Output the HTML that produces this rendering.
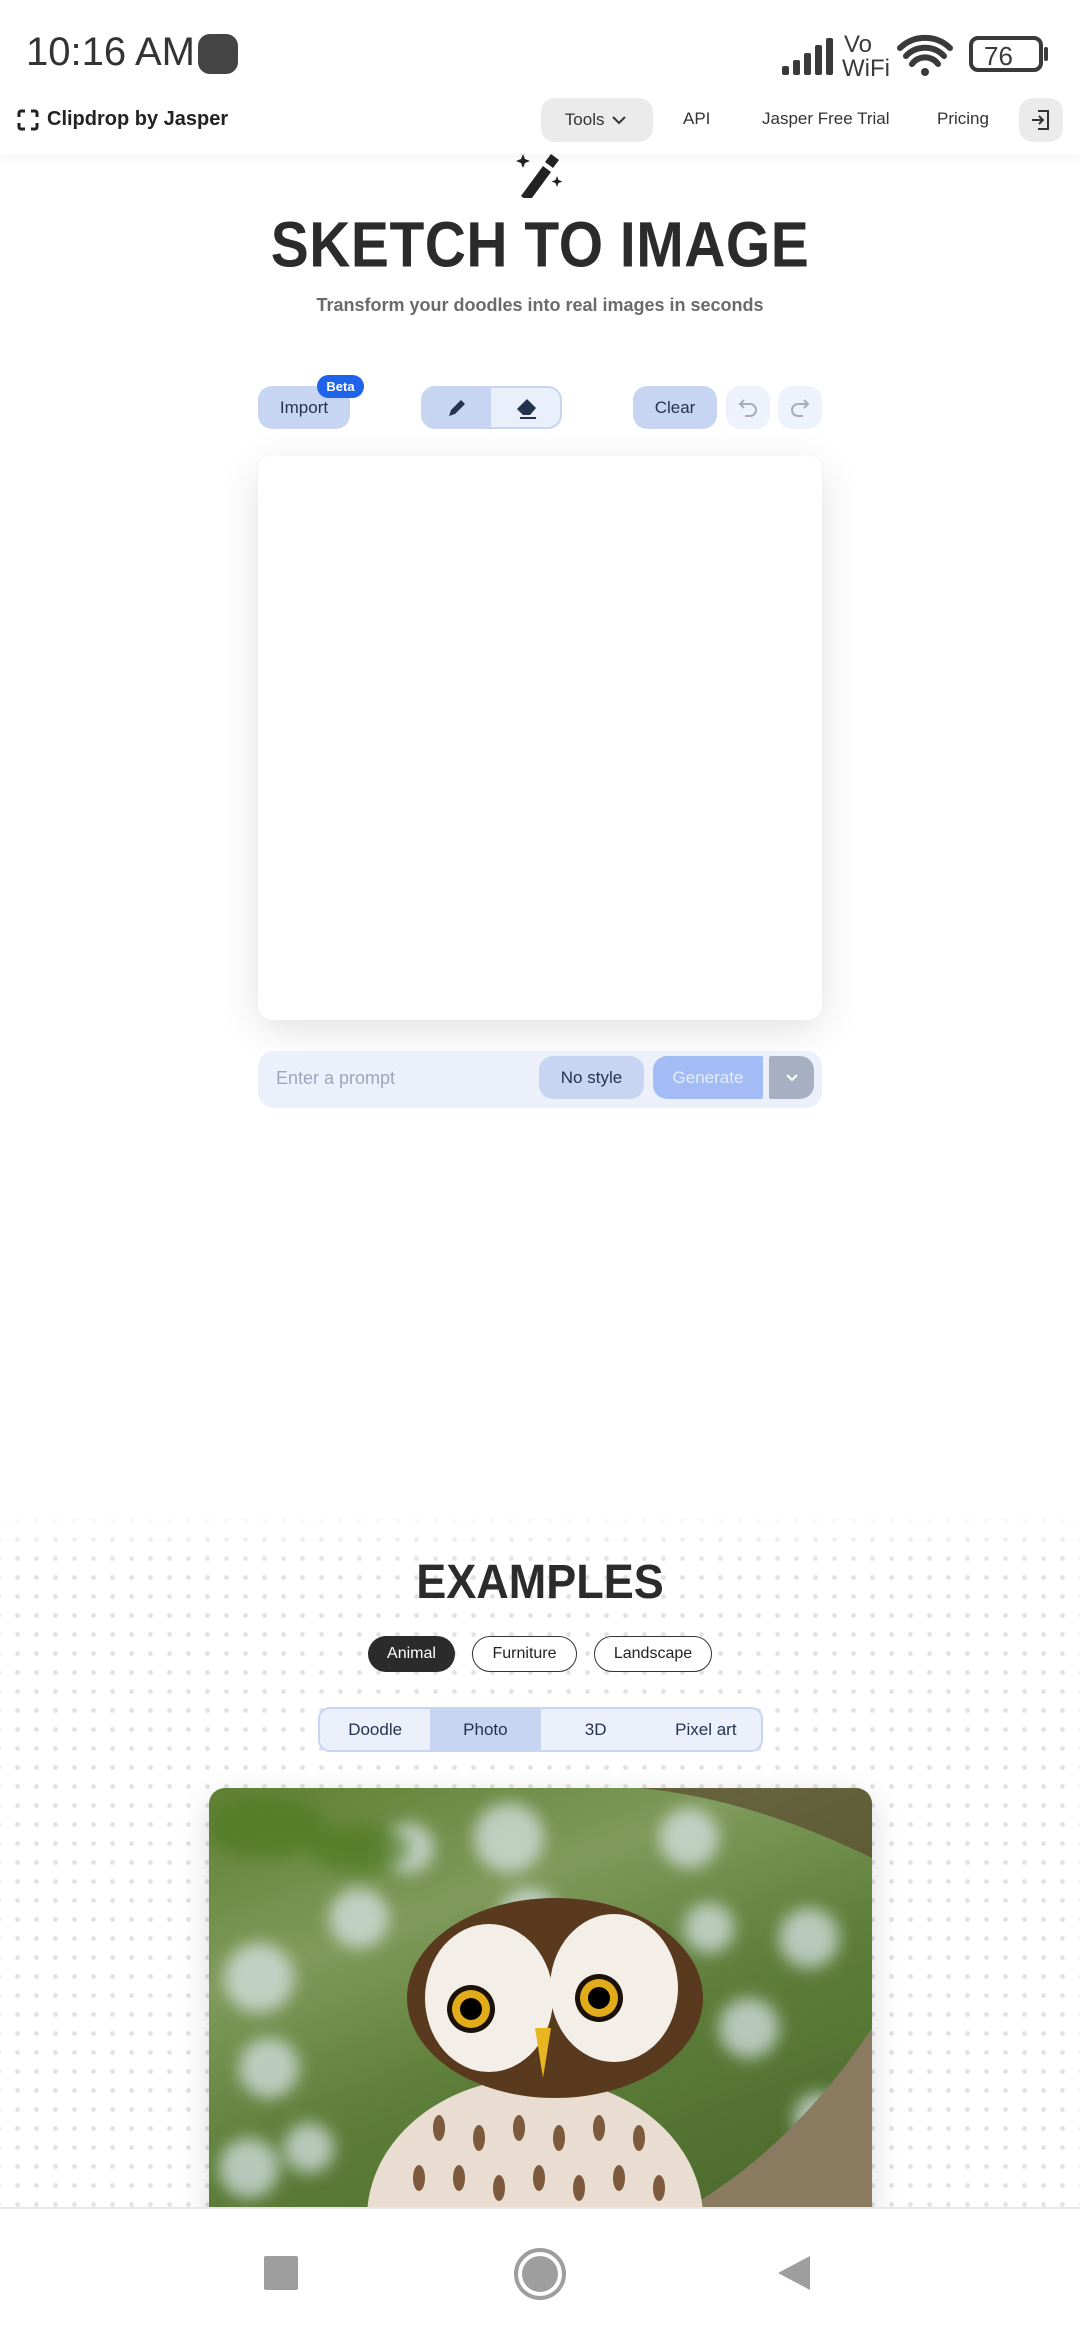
<!DOCTYPE html>
<html><head><meta charset="utf-8"><style>
*{box-sizing:border-box;margin:0;padding:0}
body{width:1080px;height:2340px;position:relative;overflow:hidden;background:#fff;font-family:"Liberation Sans",sans-serif;color:#222}
.a{position:absolute}
.btn{position:absolute;display:flex;align-items:center;justify-content:center;border-radius:14px}
.dots{position:absolute;left:0;top:1505px;width:1080px;height:720px;background-image:radial-gradient(circle,#e2e2e2 2.2px,transparent 2.6px);background-size:19px 19px;background-position:8px 6px}
.fade{position:absolute;left:0;top:1505px;width:1080px;height:60px;background:linear-gradient(#fff,rgba(255,255,255,0))}
</style></head><body>
<div class="a" style="left:26px;top:30px;font-size:40px;color:#333">10:16 AM</div>
<div class="a" style="left:198px;top:34px;width:40px;height:40px;background:#444;border-radius:12px"></div>
<svg class="a" style="left:778px;top:30px" width="280" height="50" viewBox="0 0 280 50">
<g fill="#3a3a3a"><rect x="4" y="36" width="7" height="9" rx="2"/><rect x="15" y="30" width="7" height="15" rx="2"/><rect x="26" y="23" width="7" height="22" rx="2"/><rect x="37" y="15" width="7" height="30" rx="2"/><rect x="48" y="8" width="7" height="37" rx="2"/></g>
<text x="66" y="22" font-size="24" fill="#3a3a3a" font-family="Liberation Sans">Vo</text>
<text x="64" y="46" font-size="24" fill="#3a3a3a" font-family="Liberation Sans">WiFi</text>
<path d="M122 18a36 36 0 0 1 50 0M128 26a26 26 0 0 1 38 0M134 34a16 16 0 0 1 26 0" stroke="#3a3a3a" stroke-width="6" fill="none" stroke-linecap="round"/>
<circle cx="147" cy="42" r="4" fill="#3a3a3a"/>
<rect x="193" y="8" width="70" height="32" rx="7" fill="none" stroke="#3a3a3a" stroke-width="4"/>
<rect x="266" y="17" width="4" height="14" rx="2" fill="#3a3a3a"/>
<text x="206" y="35" font-size="26" fill="#3a3a3a" font-family="Liberation Sans">76</text>
</svg>
<div class="a" style="left:0;top:92px;width:1080px;height:62px;background:#fff;box-shadow:0 6px 10px rgba(0,0,0,0.04)"></div>
<svg class="a" style="left:16px;top:108px" width="24" height="24" viewBox="0 0 24 24"><path d="M3 9V5a2 2 0 0 1 2-2h4M15 3h4a2 2 0 0 1 2 2v4M21 15v4a2 2 0 0 1-2 2h-4M9 21H5a2 2 0 0 1-2-2v-4" stroke="#222" stroke-width="3" fill="none"/></svg>
<div class="a" style="left:47px;top:108px;font-size:20px;font-weight:bold;color:#222">Clipdrop by Jasper</div>
<div class="btn" style="left:541px;top:98px;width:112px;height:44px;background:#ebebeb;font-size:17px;color:#333">Tools&nbsp;<svg width="20" height="14" viewBox="0 0 20 14"><path d="M4 4l6 6 6-6" stroke="#333" stroke-width="2" fill="none"/></svg></div>
<div class="a" style="left:683px;top:109px;font-size:17px;color:#333">API</div>
<div class="a" style="left:762px;top:109px;font-size:17px;color:#333">Jasper Free Trial</div>
<div class="a" style="left:937px;top:109px;font-size:17px;color:#333">Pricing</div>
<div class="btn" style="left:1019px;top:98px;width:44px;height:44px;background:#ebebeb"><svg width="22" height="24" viewBox="0 0 22 24"><path d="M8 3h10v18H8M2 12h11M9 8l4 4-4 4" stroke="#333" stroke-width="2" fill="none"/></svg></div>
<svg class="a" style="left:515px;top:152px" width="50" height="46" viewBox="0 0 50 46"><path d="M6 44l22-30 8 6-22 30z" fill="#222"/><path d="M30 10l6-8 8 6-6 8z" fill="#222"/><path d="M8 2l2 5 5 2-5 2-2 5-2-5-5-2 5-2z" fill="#222"/><path d="M42 24l1.5 4 4 1.5-4 1.5-1.5 4-1.5-4-4-1.5 4-1.5z" fill="#222"/></svg>
<div class="a" style="left:0;top:212px;width:1080px;text-align:center;font-size:57px;font-weight:bold;color:#2b2b2b;transform:scaleY(1.12);letter-spacing:0.5px">SKETCH TO IMAGE</div>
<div class="a" style="left:0;top:295px;width:1080px;text-align:center;font-size:18px;font-weight:bold;color:#6a6a6a">Transform your doodles into real images in seconds</div>
<div class="btn" style="left:258px;top:386px;width:92px;height:43px;background:#c8d5f2;font-size:17px;color:#25324f">Import</div>
<div class="btn" style="left:317px;top:375px;width:47px;height:23px;border-radius:12px;background:#1f63ea;color:#fff;font-size:13px;font-weight:bold">Beta</div>
<div class="a" style="left:421px;top:386px;width:141px;height:43px;border-radius:14px;border:2px solid #c8d5f2;background:#eaf0fb;overflow:hidden"><div class="a" style="left:0;top:0;width:68px;height:100%;background:#c8d5f2"></div>
<svg class="a" style="left:24px;top:10px" width="20" height="20" viewBox="0 0 20 20"><path d="M2 18l2-6 10-10 4 4-10 10z" fill="#25324f"/></svg>
<svg class="a" style="left:92px;top:9px" width="24" height="22" viewBox="0 0 24 22"><path d="M2 12l10-10 9 9-6 7H8z" fill="#25324f"/><path d="M5 21h16" stroke="#25324f" stroke-width="2"/></svg></div>
<div class="btn" style="left:633px;top:386px;width:84px;height:43px;background:#c8d5f2;font-size:17px;color:#25324f">Clear</div>
<div class="btn" style="left:726px;top:386px;width:44px;height:43px;background:#eef2fb"><svg width="22" height="22" viewBox="0 0 22 22"><path d="M7 3L3 7l4 4M3 7h10a6 6 0 0 1 0 12H8" stroke="#aab" stroke-width="2" fill="none"/></svg></div>
<div class="btn" style="left:778px;top:386px;width:44px;height:43px;background:#eef2fb"><svg width="22" height="22" viewBox="0 0 22 22"><path d="M15 3l4 4-4 4M19 7H9a6 6 0 0 0 0 12h5" stroke="#aab" stroke-width="2" fill="none"/></svg></div>
<div class="a" style="left:258px;top:456px;width:564px;height:564px;background:#fff;border-radius:14px;box-shadow:0 10px 40px rgba(0,0,0,0.12)"></div>
<div class="a" style="left:258px;top:1051px;width:564px;height:57px;background:#ebf0fb;border-radius:16px"></div>
<div class="a" style="left:276px;top:1068px;font-size:18px;color:#9ea7b8">Enter a prompt</div>
<div class="btn" style="left:539px;top:1056px;width:105px;height:43px;background:#c8d5f2;font-size:17px;color:#25324f">No style</div>
<div class="btn" style="left:653px;top:1056px;width:110px;height:43px;background:#a3bcf5;border-radius:14px 2px 2px 14px;font-size:17px;color:#e6edfc">Generate</div>
<div class="btn" style="left:769px;top:1056px;width:45px;height:43px;background:#a7afc2;border-radius:2px 14px 14px 2px"><svg width="16" height="12" viewBox="0 0 16 12"><path d="M3 3l5 5 5-5" stroke="#fff" stroke-width="2" fill="none"/></svg></div>
<div class="dots"></div><div class="fade"></div>
<div class="a" style="left:0;top:1556px;width:1080px;text-align:center;font-size:45px;font-weight:bold;color:#2b2b2b;transform:scaleY(1.08)">EXAMPLES</div>
<div class="btn" style="left:368px;top:1636px;width:87px;height:36px;border-radius:18px;background:#2b2b2b;color:#fff;font-size:16px">Animal</div>
<div class="btn" style="left:472px;top:1636px;width:105px;height:36px;border-radius:18px;background:#fff;border:1.5px solid #333;font-size:16px;color:#222">Furniture</div>
<div class="btn" style="left:594px;top:1636px;width:118px;height:36px;border-radius:18px;background:#fff;border:1.5px solid #333;font-size:16px;color:#222">Landscape</div>
<div class="a" style="left:318px;top:1707px;width:445px;height:45px;border-radius:12px;border:2px solid #c8d5f2;background:#ebf0fb;overflow:hidden;display:flex;font-size:17px;color:#25324f">
<div style="flex:1;display:flex;align-items:center;justify-content:center">Doodle</div>
<div style="flex:1;display:flex;align-items:center;justify-content:center;background:#c8d5f2">Photo</div>
<div style="flex:1;display:flex;align-items:center;justify-content:center">3D</div>
<div style="flex:1;display:flex;align-items:center;justify-content:center">Pixel art</div></div>
<div class="a" style="left:209px;top:1788px;width:663px;height:440px;border-radius:16px;overflow:hidden;box-shadow:0 8px 30px rgba(0,0,0,0.15);background:linear-gradient(160deg,#5f7f33 0%,#7f9a5a 30%,#5e7f3a 55%,#48662a 100%)">
<svg width="663" height="440" viewBox="0 0 663 440">
<defs><filter id="b"><feGaussianBlur stdDeviation="8"/></filter></defs>
<g fill="#dde8f0" opacity="0.7" filter="url(#b)"><circle cx="50" cy="190" r="35"/><circle cx="60" cy="280" r="30"/><circle cx="40" cy="380" r="30"/><circle cx="300" cy="50" r="35"/><circle cx="320" cy="130" r="30"/><circle cx="150" cy="130" r="30"/><circle cx="200" cy="60" r="25"/><circle cx="480" cy="50" r="30"/><circle cx="540" cy="240" r="30"/><circle cx="600" cy="150" r="30"/><circle cx="500" cy="140" r="25"/><circle cx="100" cy="360" r="25"/><circle cx="610" cy="330" r="25"/></g>
<g fill="#4d7a22" opacity="0.7" filter="url(#b)"><ellipse cx="60" cy="40" rx="60" ry="30"/><ellipse cx="150" cy="60" rx="50" ry="25"/></g>
<path d="M430 0 Q540 10 663 70 L663 0z" fill="#5a4a30" opacity="0.7"/>
<path d="M440 440 Q570 380 663 240 L663 440z" fill="#8a7a60"/>
<ellipse cx="326" cy="430" rx="168" ry="140" fill="#e8ddd0"/>
<g fill="#6b4424" opacity="0.85"><ellipse cx="230" cy="340" rx="6" ry="13"/><ellipse cx="270" cy="350" rx="6" ry="13"/><ellipse cx="310" cy="340" rx="6" ry="13"/><ellipse cx="350" cy="350" rx="6" ry="13"/><ellipse cx="390" cy="340" rx="6" ry="13"/><ellipse cx="430" cy="350" rx="6" ry="13"/><ellipse cx="250" cy="390" rx="6" ry="13"/><ellipse cx="290" cy="400" rx="6" ry="13"/><ellipse cx="330" cy="390" rx="6" ry="13"/><ellipse cx="370" cy="400" rx="6" ry="13"/><ellipse cx="410" cy="390" rx="6" ry="13"/><ellipse cx="210" cy="390" rx="6" ry="13"/><ellipse cx="450" cy="400" rx="6" ry="13"/></g>
<ellipse cx="346" cy="210" rx="148" ry="100" fill="#5a3a1e"/>
<ellipse cx="280" cy="210" rx="64" ry="74" fill="#f3efe8"/>
<ellipse cx="405" cy="200" rx="64" ry="74" fill="#f3efe8"/>
<circle cx="262" cy="221" r="24" fill="#1a1208"/><circle cx="262" cy="221" r="19" fill="#e2ab1a"/><circle cx="262" cy="221" r="11" fill="#000"/>
<circle cx="390" cy="210" r="24" fill="#1a1208"/><circle cx="390" cy="210" r="19" fill="#e2ab1a"/><circle cx="390" cy="210" r="11" fill="#000"/>
<path d="M326 240 L342 240 L334 290z" fill="#e6b520"/>
</svg></div>
<div class="a" style="left:0;top:2207px;width:1080px;height:133px;background:#fff;border-top:2px solid #e6e6e6"></div>
<div class="a" style="left:264px;top:2256px;width:34px;height:34px;background:#9e9e9e;border-radius:2px"></div>
<div class="a" style="left:514px;top:2248px;width:52px;height:52px;border-radius:50%;border:4px solid #9e9e9e;padding:4px"><div style="width:100%;height:100%;border-radius:50%;background:#9e9e9e"></div></div>
<svg class="a" style="left:776px;top:2254px" width="36" height="38" viewBox="0 0 36 38"><path d="M34 2v34L2 19z" fill="#9e9e9e"/></svg>
</body></html>
